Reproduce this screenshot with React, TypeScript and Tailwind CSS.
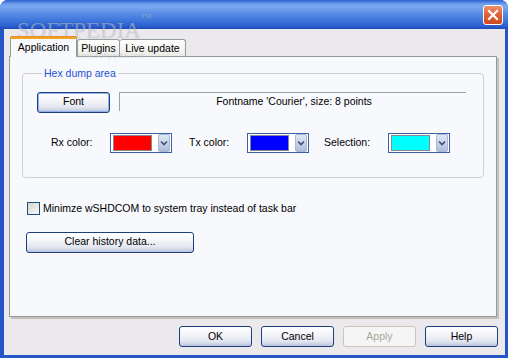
import React from "react";

const btn =
  "h-[21px] rounded-[3px] border border-[#1d3f7d] bg-[linear-gradient(180deg,#ffffff_0%,#f4f5f9_40%,#e2e6f0_75%,#b9c4de_100%)] flex items-center justify-center text-black";

function Combo({ color }: { color: string }) {
  return (
    <div className="w-[62px] h-[20px] border border-[#3d5fa8] bg-white flex items-center pl-[2px] pr-[1px] gap-[6px]">
      <div className="w-[41px] h-[16px] border border-[#8a8a8a]" style={{ background: color }} />
      <div className="w-[12px] h-[18px] rounded-[2px] border border-[#a9b8d6] bg-[linear-gradient(180deg,#dfe7f5_0%,#c3cfe6_60%,#aebcd8_100%)] flex items-center justify-center">
        <svg width="8" height="6" viewBox="0 0 8 6">
          <path d="M1 1.5 L4 4.5 L7 1.5" stroke="#3d4f73" strokeWidth="1.6" fill="none" />
        </svg>
      </div>
    </div>
  );
}

function TitleBar() {
  return (
    <div className="h-[29px] shrink-0 flex items-start justify-end pr-[5px] pt-[5px] bg-[linear-gradient(180deg,#2c5fd0_0%,#6f9fee_14%,#7aa8f0_24%,#5a8ee6_45%,#3f76dc_70%,#2e62d2_88%,#1e4ab8_100%)]">
      <div className="w-[20px] h-[20px] rounded-[3px] border border-white bg-[linear-gradient(180deg,#f0916a_0%,#e0623a_45%,#cc4a22_100%)] flex items-center justify-center">
        <svg width="12" height="12" viewBox="0 0 12 12">
          <path d="M2 2 L10 10 M10 2 L2 10" stroke="#ffffff" strokeWidth="2.2" strokeLinecap="square" />
        </svg>
      </div>
    </div>
  );
}

export default function App() {
  return (
    <div className="relative w-[508px] h-[358px] flex flex-col rounded-t-[8px] overflow-hidden bg-[#2456c8] font-['Liberation_Sans',Arial,sans-serif] text-[10.5px] text-black">
      <TitleBar />
      <div className="flex-1 ml-[4px] mr-[3px] mb-[3px] bg-[#ece9ec] flex flex-col pl-[5px] pr-[8px] pt-[7px]">
        <div className="flex items-end pl-[1px] h-[20px]">
          <div className="relative z-10 w-[67px] h-[21px] -mb-[1px] border border-b-0 border-[#919b9c] rounded-t-[3px] bg-[#f8f9fc] flex items-center justify-center pt-[2px]">
            <div className="absolute -top-[1px] -left-[1px] -right-[1px] h-[3px] rounded-t-[3px] bg-[#f1a41f] border-t border-[#e68b2c]" />
            Application
          </div>
          <div className="w-[43px] h-[17px] border border-b-0 border-[#919b9c] rounded-t-[3px] bg-[linear-gradient(180deg,#ffffff,#ecebe6)] flex items-center justify-center pt-[1px]">
            Plugins
          </div>
          <div className="w-[66px] h-[17px] border border-b-0 border-l-0 border-[#919b9c] rounded-t-[3px] bg-[linear-gradient(180deg,#ffffff,#ecebe6)] flex items-center justify-center pt-[1px]">
            Live update
          </div>
        </div>
        <div className="h-[261px] border border-[#919b9c] bg-[#f8f9fc] shadow-[2px_2px_0_#c5c2b8] flex flex-col px-[12px] pt-[9px]">
          <fieldset className="border border-[#d0d0cf] rounded-[4px] px-[14px] pt-[10px] pb-[24px]">
            <legend className="ml-[5px] px-[2px] text-[#1d50d0]">Hex dump area</legend>
            <div className="flex items-start gap-[9px]">
              <div className={`${btn} w-[73px] shadow-[inset_0_0_0_1px_#8fb0ea]`}>Font</div>
              <div className="w-[347px] h-[19px] border-t border-l border-[#a0a0a0] flex items-center justify-center pl-[2px]">
                Fontname 'Courier', size: 8 points
              </div>
            </div>
            <div className="flex items-center mt-[20px] pl-[14px]">
              <span className="w-[59px]">Rx color:</span>
              <Combo color="#ff0000" />
              <span className="w-[58px] ml-[17px]">Tx color:</span>
              <Combo color="#0000ff" />
              <span className="w-[64px] ml-[15px]">Selection:</span>
              <Combo color="#00ffff" />
            </div>
          </fieldset>
          <label className="flex items-center mt-[23px] ml-[5px] gap-[3px]">
            <span className="w-[13px] h-[13px] border border-[#1c5180] bg-[linear-gradient(135deg,#d5d5cf,#f8f8f6)]" />
            <span>Minimze wSHDCOM to system tray instead of task bar</span>
          </label>
          <div className={`${btn} w-[168px] mt-[15px] ml-[4px]`}>Clear history data...</div>
        </div>
        <div className="flex justify-end gap-[9px] mt-[9px] -mr-[1px]">
          <div className={`${btn} w-[73px]`}>OK</div>
          <div className={`${btn} w-[73px]`}>Cancel</div>
          <div className="w-[73px] h-[21px] rounded-[3px] border border-[#c9c7ba] bg-[#f5f5f5] flex items-center justify-center text-[#aca899]">
            Apply
          </div>
          <div className={`${btn} w-[73px]`}>Help</div>
        </div>
      </div>
      <div className="absolute left-[17px] top-[19px] font-['Liberation_Serif',serif] text-[23px] leading-[23px] text-white/35 [text-shadow:0_0_1px_rgba(70,80,110,0.35)] pointer-events-none">
        SOFTPEDIA<sup className="text-[7px] align-top">TM</sup>
      </div>
      <div className="absolute left-[76px] top-[50px] text-[8px] text-[#c8c8d0]/60 pointer-events-none">www.softpedia.com</div>
    </div>
  );
}
